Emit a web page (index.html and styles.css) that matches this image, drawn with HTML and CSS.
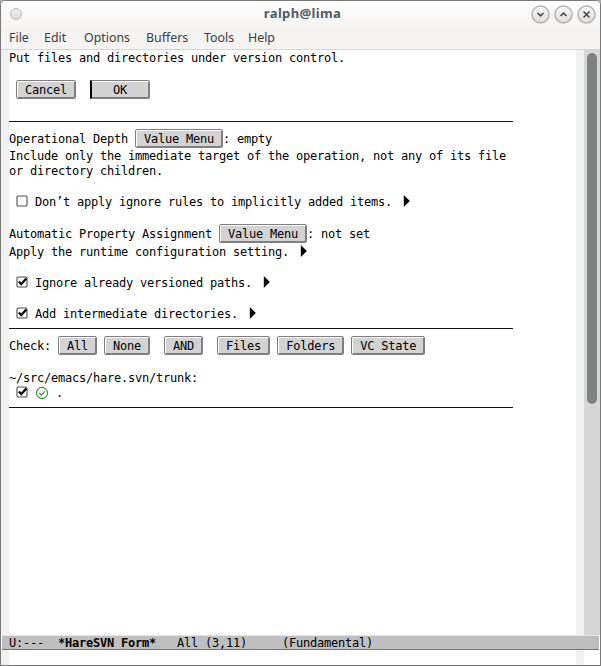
FILE: index.html
```html
<!DOCTYPE html>
<html lang="en">
<head>
<meta charset="utf-8">
<title>ralph@lima</title>
<link rel="stylesheet" href="styles.css">
</head>
<body>
<svg class="defs" width="0" height="0">
  <symbol id="box" viewBox="0 0 12 12"><rect x="1" y="1" width="10" height="10" rx="1.3" fill="#fff" stroke="#4a4c4a" stroke-width="1.1"/></symbol>
  <symbol id="checked" viewBox="0 0 12 12"><rect x="1" y="1" width="10" height="10" rx="1.3" fill="#fff" stroke="#4a4c4a" stroke-width="1.1"/><path d="M2.9 5.6 5.2 8.2 10.3 2.5" fill="none" stroke="#000" stroke-width="2.2"/></symbol>
  <symbol id="more" viewBox="0 0 7 12"><path d="M.8 0 6.8 6 .8 12Z" fill="#000"/></symbol>
</svg>
<div class="window">
  <header class="titlebar">
    <span class="dot"></span>
    <h1 class="title">ralph@lima</h1>
    <div class="controls">
      <svg class="control" viewBox="0 0 19 19"><use href="#ring"/><path d="M6.5 8 9.5 10.9 12.5 8"/></svg>
      <svg class="control" viewBox="0 0 19 19"><use href="#ring"/><path d="M6.5 11 9.5 8.1 12.5 11"/></svg>
      <svg class="control" viewBox="0 0 19 19"><use href="#ring"/><path d="M6.5 6.5 12.5 12.5M12.5 6.5 6.5 12.5"/></svg>
    </div>
  </header>
  <nav class="menubar"><span>File</span><span>Edit</span><span>Options</span><span>Buffers</span><span>Tools</span><span>Help</span></nav>
  <main class="frame">
    <div class="fringe"></div>
    <div class="buffer">
      <div class="row">Put files and directories under version control.</div>
      <div class="row"></div>
      <div class="row tall"> <span class="button"> Cancel </span>  <span class="button current">   OK   </span></div>
      <div class="row"></div>
      <div class="row"><hr class="rule"></div>
      <div class="row tall">Operational Depth <span class="button"> Value Menu </span>: empty</div>
      <div class="row">Include only the immediate target of the operation, not any of its file</div>
      <div class="row">or directory children.</div>
      <div class="row"></div>
      <div class="row item"> <svg class="check"><use href="#box"/></svg> Don’t apply ignore rules to implicitly added items. <svg class="more"><use href="#more"/></svg></div>
      <div class="row"></div>
      <div class="row tall">Automatic Property Assignment <span class="button"> Value Menu </span>: not set</div>
      <div class="row item">Apply the runtime configuration setting. <svg class="more"><use href="#more"/></svg></div>
      <div class="row"></div>
      <div class="row item"> <svg class="check"><use href="#checked"/></svg> Ignore already versioned paths. <svg class="more"><use href="#more"/></svg></div>
      <div class="row"></div>
      <div class="row item"> <svg class="check"><use href="#checked"/></svg> Add intermediate directories. <svg class="more"><use href="#more"/></svg></div>
      <div class="row"><hr class="rule"></div>
      <div class="row tall">Check: <span class="button"> All </span> <span class="button"> None </span>  <span class="button"> AND </span>  <span class="button"> Files </span> <span class="button"> Folders </span> <span class="button"> VC State </span></div>
      <div class="row"></div>
      <div class="row">~/src/emacs/hare.svn/trunk:</div>
      <div class="row path"> <svg class="check"><use href="#checked"/></svg> <svg class="state" viewBox="0 0 14 14"><circle cx="7" cy="7" r="5.6"/><path d="M4.3 7.2 6.3 9.1 10 5.1"/></svg> .</div>
      <div class="row"><hr class="rule"></div>
    </div>
    <div class="fringe"></div>
    <div class="scrollbar"><div class="thumb"></div></div>
  </main>
  <div class="modeline">U:---  <b>*HareSVN Form*</b>   All (3,11)     (Fundamental)</div>
  <footer class="echo"><div class="fringe"></div><div class="message"></div><div class="fringe end"></div></footer>
</div>
<svg class="defs" width="0" height="0">
  <linearGradient id="shade" x1="0" y1="0" x2="0" y2="1"><stop offset="0" stop-color="#fbfbfb"/><stop offset="1" stop-color="#dcdcdc"/></linearGradient>
  <symbol id="ring" viewBox="0 0 19 19"><circle cx="9.5" cy="9.5" r="8.5" fill="url(#shade)" stroke="#b2b2b0" stroke-width="1.5"/></symbol>
</svg>
</body>
</html>
```
FILE: styles.css
```css
* { box-sizing: border-box; }
html, body { margin: 0; height: 666px; overflow: hidden; }
body { background: #a9a9a9; }
.defs { position: absolute; }
.window {
  width: 601px; height: 666px;
  display: flex; flex-direction: column;
  border: 1px solid #797979;
  border-radius: 5px 5px 0 0;
  background: #fff;
  overflow: hidden;
}
.titlebar {
  display: grid; grid-template-columns: 82px 1fr 78px; align-items: center;
  height: 27px;
  background: linear-gradient(#fefefe, #f5f4f3);
}
.dot {
  width: 12px; height: 12px; margin: -2px 0 0 9px;
  border: 1.5px solid #bcbcbc; border-radius: 50%;
  background: linear-gradient(#f0f0f0, #d9d9d9);
}
.title {
  margin: -3px 0 0; text-align: center; color: #4d5c66;
  font: bold 13px/20px "Noto Sans", sans-serif;
  letter-spacing: .35px;
}
.controls { display: flex; justify-content: flex-end; gap: 4px; padding-right: 4px; }
.control { width: 19px; height: 19px; fill: none; stroke: #454545; stroke-width: 1.5; }
.menubar {
  display: grid; grid-template-columns: 35px 40px 62px 58px 44px auto; align-items: center;
  height: 22px; padding: 0 0 1px 8px;
  background: #f5f4f3; border-bottom: 1px solid #d6d6d6;
  color: #3c3c3c; font: 12.4px/18px "Noto Sans", sans-serif;
}
.frame { display: flex; height: 585px; }
.fringe { width: 8px; background: #f1f1f1; }
.buffer { flex: 1; }
.row, .modeline {
  font: 12px/17px "DejaVu Sans Mono", monospace;
  letter-spacing: -.2246px;
  white-space: pre; color: #000;
}
.row { height: 15px; }
.tall { height: 19px; line-height: 21px; }
.item { height: 16px; line-height: 18px; }
.button, .check, .more, .state { display: inline-block; vertical-align: top; }
.button {
  height: 19px; line-height: 17px;
  padding: 1px;
  border: 1px solid #7f7f7f; border-radius: 2px;
  background: #d3d3d3;
  box-shadow: inset 1px 1px #fff, inset -1px -1px #7f7f7f;
}
.current { border-left: 2px solid #000; border-radius: 0 2px 2px 0; padding-left: 0; box-shadow: inset 0 1px #fff, inset -1px -1px #7f7f7f; }
.rule { width: 504px; height: 1px; margin: 0; border: 0; background: #111; transform: translateY(7px); }
.check { width: 12px; height: 12px; margin-top: 2px; }
.path .check { margin-top: 1px; }
.more { width: 7px; height: 12px; margin: 2px 0 0 4px; }
.state { width: 14px; height: 14px; margin-top: 1px; fill: none; stroke: #2c962c; stroke-width: 1.1; }
.scrollbar { width: 16px; padding: 3px 3px 0; background: #d6d6d6; }
.thumb { height: 351px; border-radius: 5px; background: #7e8282; }
.modeline {
  height: 15px; margin: 0 1px; padding-left: 7px; line-height: 14px;
  background: #bfbfbf;
  border-top: 1px solid #e5e5e5; border-bottom: 1px solid #777;
}
.echo { display: flex; flex: 1; }
.message { flex: 1; }
.end { margin-right: 16px; }
```
